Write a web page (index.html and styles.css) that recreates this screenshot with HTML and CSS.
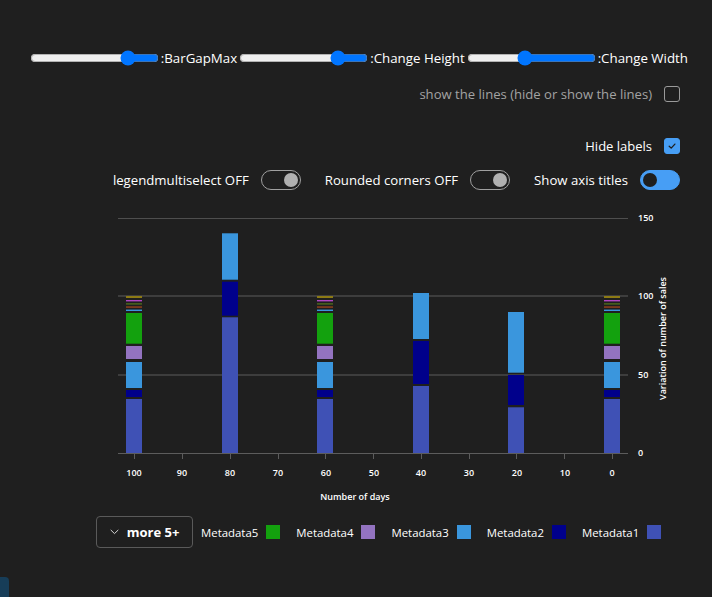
FILE: index.html
```html
<!DOCTYPE html>
<html lang="en">
<head>
<meta charset="utf-8">
<title>Chart</title>
<link rel="stylesheet" href="styles.css">
</head>
<body>
<div class="page">
  <div class="controls">
    <div class="slider-row">
      <input class="range" type="range" dir="rtl" min="0" max="100" value="20"><span class="slider-label">:BarGapMax</span>
      <input class="range" type="range" dir="rtl" min="0" max="100" value="20"><span class="slider-label">:Change Height</span>
      <input class="range" type="range" dir="rtl" min="0" max="100" value="55"><span class="slider-label">:Change Width</span>
    </div>
    <div class="check-row muted">
      <span>show the lines (hide or show the lines)</span>
      <span class="checkbox"></span>
    </div>
    <div class="check-row hide-labels">
      <span>Hide labels</span>
      <span class="checkbox checked">
        <svg width="10" height="10" viewBox="0 0 10 10"><path d="M2.2 5.2 L4.2 7.1 L7.9 3.1" fill="none" stroke="#1f1f1f" stroke-width="1.3" stroke-linecap="round" stroke-linejoin="round"/></svg>
      </span>
    </div>
    <div class="toggle-row">
      <span class="toggle-label">legendmultiselect OFF</span>
      <span class="switch"><span class="knob"></span></span>
      <span class="toggle-label">Rounded corners OFF</span>
      <span class="switch"><span class="knob"></span></span>
      <span class="toggle-label">Show axis titles</span>
      <span class="switch on"><span class="knob"></span></span>
    </div>
  </div>

  <svg class="chart" width="712" height="300" viewBox="0 0 712 300">
    <g class="grid">
      <line x1="118" y1="13.5" x2="628" y2="13.5" class="grid-top"/>
      <line x1="118" y1="91" x2="628" y2="91" class="grid-mid"/>
      <line x1="118" y1="170" x2="628" y2="170" class="grid-mid"/>
    </g>
    <g class="bars">
      <!-- x = 100 -->
      <rect x="126" y="194" width="16" height="54" fill="#3f51b5"/>
      <rect x="126" y="185" width="16" height="7" fill="#00008b"/>
      <rect x="126" y="157" width="16" height="26" fill="#3a96dd"/>
      <rect x="126" y="141" width="16" height="13" fill="#9373c0"/>
      <rect x="126" y="108" width="16" height="30.7" fill="#13a10e"/>
      <rect x="126" y="104.6" width="16" height="1.4" fill="#3a96dd"/>
      <rect x="126" y="101.3" width="16" height="1.5" fill="#8e3f1c"/>
      <rect x="126" y="98.2" width="16" height="1.4" fill="#4e6a1c"/>
      <rect x="126" y="95" width="16" height="1.4" fill="#b146c2"/>
      <rect x="126" y="91" width="16" height="2" fill="#8c7a14"/>
      <!-- x = 80 -->
      <rect x="222" y="112.3" width="16" height="135.7" fill="#3f51b5"/>
      <rect x="222" y="76.7" width="16" height="34" fill="#00008b"/>
      <rect x="222" y="28.3" width="16" height="46.4" fill="#3a96dd"/>
      <!-- x = 60 -->
      <rect x="317" y="194" width="16" height="54" fill="#3f51b5"/>
      <rect x="317" y="185" width="16" height="7" fill="#00008b"/>
      <rect x="317" y="157" width="16" height="26" fill="#3a96dd"/>
      <rect x="317" y="141" width="16" height="13" fill="#9373c0"/>
      <rect x="317" y="108" width="16" height="30.7" fill="#13a10e"/>
      <rect x="317" y="104.6" width="16" height="1.4" fill="#3a96dd"/>
      <rect x="317" y="101.3" width="16" height="1.5" fill="#8e3f1c"/>
      <rect x="317" y="98.2" width="16" height="1.4" fill="#4e6a1c"/>
      <rect x="317" y="95" width="16" height="1.4" fill="#b146c2"/>
      <rect x="317" y="91" width="16" height="2" fill="#8c7a14"/>
      <!-- x = 40 -->
      <rect x="413" y="181" width="16" height="67" fill="#3f51b5"/>
      <rect x="413" y="136" width="16" height="43" fill="#00008b"/>
      <rect x="413" y="88" width="16" height="46" fill="#3a96dd"/>
      <!-- x = 20 -->
      <rect x="508" y="202.3" width="16" height="45.7" fill="#3f51b5"/>
      <rect x="508" y="170" width="16" height="30" fill="#00008b"/>
      <rect x="508" y="107" width="16" height="60.7" fill="#3a96dd"/>
      <!-- x = 0 -->
      <rect x="604" y="194" width="16" height="54" fill="#3f51b5"/>
      <rect x="604" y="185" width="16" height="7" fill="#00008b"/>
      <rect x="604" y="157" width="16" height="26" fill="#3a96dd"/>
      <rect x="604" y="141" width="16" height="13" fill="#9373c0"/>
      <rect x="604" y="108" width="16" height="30.7" fill="#13a10e"/>
      <rect x="604" y="104.6" width="16" height="1.4" fill="#3a96dd"/>
      <rect x="604" y="101.3" width="16" height="1.5" fill="#8e3f1c"/>
      <rect x="604" y="98.2" width="16" height="1.4" fill="#4e6a1c"/>
      <rect x="604" y="95" width="16" height="1.4" fill="#b146c2"/>
      <rect x="604" y="91" width="16" height="2" fill="#8c7a14"/>
    </g>
    <line x1="118" y1="248.5" x2="628" y2="248.5" class="axis"/>
    <g class="ticks">
      <line x1="134.5" y1="249" x2="134.5" y2="254"/>
      <line x1="182.5" y1="249" x2="182.5" y2="254"/>
      <line x1="230.5" y1="249" x2="230.5" y2="254"/>
      <line x1="278.5" y1="249" x2="278.5" y2="254"/>
      <line x1="325.5" y1="249" x2="325.5" y2="254"/>
      <line x1="373.5" y1="249" x2="373.5" y2="254"/>
      <line x1="421.5" y1="249" x2="421.5" y2="254"/>
      <line x1="469.5" y1="249" x2="469.5" y2="254"/>
      <line x1="516.5" y1="249" x2="516.5" y2="254"/>
      <line x1="564.5" y1="249" x2="564.5" y2="254"/>
      <line x1="612.5" y1="249" x2="612.5" y2="254"/>
    </g>
    <g class="xlabels">
      <text x="134" y="271">100</text>
      <text x="182" y="271">90</text>
      <text x="230" y="271">80</text>
      <text x="278" y="271">70</text>
      <text x="326" y="271">60</text>
      <text x="374" y="271">50</text>
      <text x="421" y="271">40</text>
      <text x="469" y="271">30</text>
      <text x="517" y="271">20</text>
      <text x="565" y="271">10</text>
      <text x="612" y="271">0</text>
    </g>
    <g class="ylabels">
      <text x="638" y="16">150</text>
      <text x="638" y="94">100</text>
      <text x="638" y="173">50</text>
      <text x="638" y="251">0</text>
    </g>
    <text class="axis-title" x="355" y="294.5">Number of days</text>
    <text class="axis-title" transform="translate(666 133.5) rotate(-90)" x="0" y="0">Variation of number of sales</text>
  </svg>

  <div class="legend">
    <button class="more">
      <svg width="9" height="6" viewBox="0 0 9 6"><path d="M1 1.2 L4.5 4.6 L8 1.2" fill="none" stroke="#d6d6d6" stroke-width="1" stroke-linecap="round" stroke-linejoin="round"/></svg>
      <span>more 5+</span>
    </button>
    <span class="legend-item"><span>Metadata5</span><span class="swatch m5"></span></span>
    <span class="legend-item"><span>Metadata4</span><span class="swatch m4"></span></span>
    <span class="legend-item"><span>Metadata3</span><span class="swatch m3"></span></span>
    <span class="legend-item"><span>Metadata2</span><span class="swatch m2"></span></span>
    <span class="legend-item"><span>Metadata1</span><span class="swatch m1"></span></span>
  </div>

  <div class="corner"></div>
</div>
</body>
</html>
```

FILE: styles.css
```css
html, body {
  margin: 0;
  padding: 0;
  background: #1f1f1f;
}

body {
  font-family: "Open Sans", "Liberation Sans", sans-serif;
  color: #ffffff;
  font-size: 13px;
}

.page {
  width: 712px;
}

.controls {
  display: flex;
  flex-direction: column;
  align-items: flex-end;
  padding: 48px 32px 0 0;
}

.slider-row {
  display: flex;
  align-items: center;
  height: 20px;
  margin-right: -8px;
  color: #ffffff;
  font-size: 13.3px;
}

.range {
  width: 129px;
  height: 16px;
  margin: 0 2px;
}

.slider-label {
  white-space: nowrap;
  line-height: 20px;
}

.check-row {
  display: flex;
  align-items: center;
  gap: 12px;
  height: 20px;
  line-height: 20px;
  margin-top: 16px;
}

.check-row.muted {
  color: #a3a3a3;
  font-size: 13.1px;
}

.check-row.hide-labels {
  margin-top: 32px;
}

.checkbox {
  width: 14px;
  height: 14px;
  border: 1px solid #9a9a9a;
  border-radius: 3px;
  display: flex;
  align-items: center;
  justify-content: center;
}

.checkbox.checked {
  background: #479ef5;
  border-color: #479ef5;
}

.toggle-row {
  display: flex;
  align-items: center;
  height: 20px;
  margin-top: 14px;
  font-size: 13.2px;
}

.toggle-label {
  line-height: 20px;
  margin-right: 12px;
  white-space: nowrap;
}

.switch {
  box-sizing: border-box;
  width: 40px;
  height: 20px;
  border: 1px solid #a0a0a0;
  border-radius: 10px;
  display: flex;
  align-items: center;
  justify-content: flex-end;
  padding: 0 2px;
  margin-right: 24px;
}

.switch:last-child {
  margin-right: 0;
}

.knob {
  width: 14px;
  height: 14px;
  border-radius: 50%;
  background: #b0b0b0;
}

.switch.on {
  background: #479ef5;
  border-color: #479ef5;
  justify-content: flex-start;
}

.switch.on .knob {
  background: #1f1f1f;
}

.chart {
  display: block;
  margin-top: 15px;
}

.grid-top {
  stroke: #4e4e4e;
  stroke-width: 1;
}

.grid-mid {
  stroke: #3d3d3d;
  stroke-width: 2;
}

.axis {
  stroke: #5c5c5c;
  stroke-width: 1;
}

.ticks line {
  stroke: #5c5c5c;
  stroke-width: 1;
}

.chart text {
  font-family: "Open Sans", "Liberation Sans", sans-serif;
  font-size: 9px;
  font-weight: 600;
  fill: #ffffff;
}

.xlabels text {
  text-anchor: middle;
}

.axis-title {
  text-anchor: middle;
}

.legend {
  display: flex;
  align-items: center;
  margin-top: 11px;
  padding-left: 96px;
  height: 32px;
}

.more {
  box-sizing: border-box;
  width: 97px;
  height: 32px;
  background: transparent;
  border: 1px solid #5a5a5a;
  border-radius: 4px;
  color: #ffffff;
  font-family: "Open Sans", "Liberation Sans", sans-serif;
  font-size: 13px;
  font-weight: 700;
  display: flex;
  align-items: center;
  justify-content: center;
  gap: 8px;
  padding: 0;
  margin-right: 8px;
}

.legend-item {
  display: flex;
  align-items: center;
  gap: 8px;
  margin-right: 16px;
  font-size: 11.4px;
  color: #ffffff;
}

.swatch {
  width: 14px;
  height: 14px;
  display: block;
}

.m1 { background: #3f51b5; }
.m2 { background: #00008b; }
.m3 { background: #3a96dd; }
.m4 { background: #9373c0; }
.m5 { background: #13a10e; }

.corner {
  margin-top: 29px;
  width: 9px;
  height: 21px;
  background: #173d58;
  border-top-right-radius: 4px;
}
```
